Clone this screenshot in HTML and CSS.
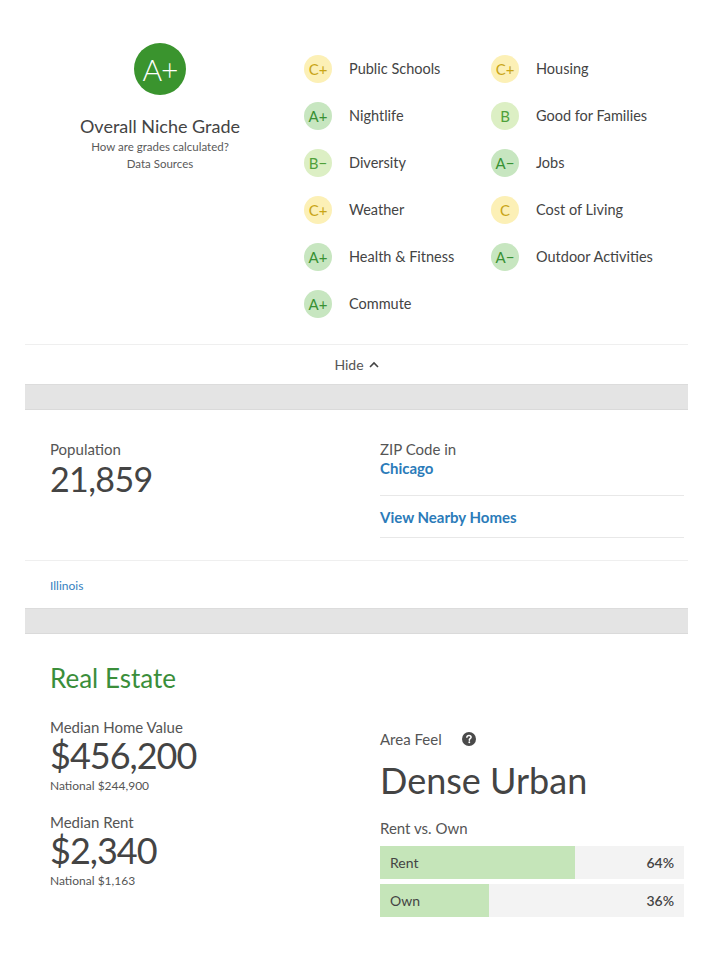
FILE: index.html
```html
<!DOCTYPE html>
<html>
<head>
<meta charset="utf-8">
<link rel="stylesheet" href="styles.css">
</head>
<body>
<div class="page">
  <section class="grades">
    <div class="overall">
      <div class="big-grade">A+</div>
      <div class="overall-title">Overall Niche Grade</div>
      <div class="overall-link">How are grades calculated?</div>
      <div class="overall-link">Data Sources</div>
    </div>
    <div class="grade-list">
      <div class="grade-item"><span class="g g-yellow">C+</span><span class="g-label">Public Schools</span></div>
      <div class="grade-item"><span class="g g-yellow">C+</span><span class="g-label">Housing</span></div>
      <div class="grade-item"><span class="g g-green">A+</span><span class="g-label">Nightlife</span></div>
      <div class="grade-item"><span class="g g-lime">B</span><span class="g-label">Good for Families</span></div>
      <div class="grade-item"><span class="g g-lime">B−</span><span class="g-label">Diversity</span></div>
      <div class="grade-item"><span class="g g-green">A−</span><span class="g-label">Jobs</span></div>
      <div class="grade-item"><span class="g g-yellow">C+</span><span class="g-label">Weather</span></div>
      <div class="grade-item"><span class="g g-yellow">C</span><span class="g-label">Cost of Living</span></div>
      <div class="grade-item"><span class="g g-green">A+</span><span class="g-label">Health &amp; Fitness</span></div>
      <div class="grade-item"><span class="g g-green">A−</span><span class="g-label">Outdoor Activities</span></div>
      <div class="grade-item"><span class="g g-green">A+</span><span class="g-label">Commute</span></div>
    </div>
  </section>
  <div class="hide-row">Hide <svg class="chev" width="10" height="7" viewBox="0 0 10 7"><path d="M1 6 L5 2 L9 6" fill="none" stroke="#444" stroke-width="1.6"/></svg></div>
  <div class="band"></div>

  <section class="about">
    <div class="about-main">
      <div class="about-col">
        <div class="label">Population</div>
        <div class="pop">21,859</div>
      </div>
      <div class="about-col right">
        <div class="zip-block">
          <div class="label">ZIP Code in</div>
          <a class="city">Chicago</a>
        </div>
        <a class="nearby">View Nearby Homes</a>
      </div>
    </div>
    <div class="state-row"><a class="state">Illinois</a></div>
  </section>
  <div class="band"></div>

  <section class="real-estate">
    <h2 class="re-title">Real Estate</h2>
    <div class="re-cols">
      <div class="re-left">
        <div class="stat">
          <div class="label">Median Home Value</div>
          <div class="money">$456,200</div>
          <div class="national">National $244,900</div>
        </div>
        <div class="stat">
          <div class="label">Median Rent</div>
          <div class="money">$2,340</div>
          <div class="national">National $1,163</div>
        </div>
      </div>
      <div class="re-right">
        <div class="feel-row"><span class="label">Area Feel</span>
          <svg class="help" width="14" height="14" viewBox="0 0 14 14"><circle cx="7" cy="7" r="7" fill="#4a4a4a"/><path d="M4.9 5.3 C4.9 4.1 5.8 3.4 7 3.4 C8.2 3.4 9.1 4.1 9.1 5.2 C9.1 6.4 7.7 6.6 7.4 7.4 L7.4 8.2" fill="none" stroke="#fff" stroke-width="1.5" stroke-linecap="round"/><circle cx="7.3" cy="10.3" r="0.95" fill="#fff"/></svg>
        </div>
        <div class="feel">Dense Urban</div>
        <div class="label rvo">Rent vs. Own</div>
        <div class="bar"><div class="fill" style="width:64%"></div><span class="bar-label">Rent</span><span class="bar-val">64%</span></div>
        <div class="bar"><div class="fill" style="width:36%"></div><span class="bar-label">Own</span><span class="bar-val">36%</span></div>
      </div>
    </div>
  </section>
</div>
</body>
</html>
```

FILE: styles.css
```css
* { box-sizing: border-box; }
body {
  margin: 0;
  background: #fff;
  font-family: "Source Sans Pro", Lato, "Open Sans", sans-serif;
  color: #444;
}
.page { padding: 0 25px; }
a { text-decoration: none; color: #2b7bb9; }

.grades {
  display: flex;
  padding-top: 43px;
  padding-bottom: 17px;
  border-bottom: 1px solid #efefef;
}
.overall {
  width: 270px;
  display: flex;
  flex-direction: column;
  align-items: center;
}
.big-grade {
  width: 52px; height: 52px;
  border-radius: 50%;
  background: #3a942e;
  color: #fff;
  font-size: 30px;
  font-weight: 300;
  display: flex; align-items: center; justify-content: center;
  letter-spacing: -1px;
}
.overall-title {
  margin-top: 20px;
  font-size: 18px;
  color: #444;
}
.overall-link { font-size: 11.5px; color: #5a5a5a; margin-top: 3px; line-height: 14px; }
.overall-link + .overall-link { margin-top: 3px; }

.grade-list {
  display: grid;
  grid-template-columns: 187px 187px;
  grid-auto-rows: 47px;
  margin-left: 9px;
  margin-top: 2px;
}
.grade-item { display: flex; align-items: center; }
.g {
  width: 28px; height: 28px; border-radius: 50%;
  display: flex; align-items: center; justify-content: center;
  font-size: 15px;
  margin-right: 17px;
  flex-shrink: 0;
}
.g-yellow { background: #fcf0b6; color: #c9a516; }
.g-green { background: #c7e6c0; color: #389133; }
.g-lime { background: #dcefc4; color: #4fa13a; }
.g-label { font-size: 14.5px; color: #444; }

.hide-row {
  height: 39px;
  display: flex; align-items: center; justify-content: center;
  font-size: 14px; color: #555;
  gap: 5px;
}
.chev { margin-top: -1px; }
.band {
  height: 26px;
  background: #e4e4e4;
  border-top: 1px solid #dcdcdc;
  border-bottom: 1px solid #dadada;
}

.about-main {
  display: flex;
  padding: 30px 4px 22px 25px;
  border-bottom: 1px solid #efefef;
}
.about-col { flex: 0 0 330px; }
.about-col.right { flex: 1; }
.label { font-size: 15px; color: #555; line-height: 18px; }
.pop { font-size: 34px; letter-spacing: -0.6px; color: #444; line-height: 38px; margin-top: 2px; }
.zip-block { padding-bottom: 17px; border-bottom: 1px solid #e8e8e8; }
.city { display: block; font-size: 15px; font-weight: 700; color: #2b7bb9; line-height: 20px; }
.nearby {
  display: block;
  font-size: 15px; font-weight: 700; color: #2b7bb9;
  padding: 12px 0 11px;
  border-bottom: 1px solid #e8e8e8;
}
.state-row { padding: 13px 25px 15px; }
.state { font-size: 12px; color: #3581c0; }

.real-estate { padding: 28px 4px 40px 25px; }
.re-title {
  margin: 0;
  font-size: 26px;
  font-weight: 400;
  color: #3a8e3a;
}
.re-cols { display: flex; margin-top: 24px; }
.re-left { flex: 0 0 330px; }
.stat + .stat { margin-top: 20px; }
.money { font-size: 36px; letter-spacing: -1px; line-height: 39px; color: #444; }
.national { font-size: 12px; color: #555; line-height: 14px; margin-top: 4px; }
.re-right { flex: 1; padding-top: 12px; }
.feel-row { display: flex; align-items: center; gap: 20px; }
.feel { font-size: 36px; line-height: 44px; color: #444; margin-top: 10px; }
.rvo { margin-top: 17px; margin-bottom: 9px; }
.bar {
  position: relative;
  height: 33px;
  background: #f3f3f3;
  display: flex; align-items: center; justify-content: space-between;
  padding: 0 10px;
  font-size: 14px;
  color: #444;
  margin-bottom: 5px;
}
.fill { position: absolute; left: 0; top: 0; bottom: 0; background: #c5e5b9; }
.bar-label, .bar-val { position: relative; }
.bar-val { font-weight: 600; }
```
